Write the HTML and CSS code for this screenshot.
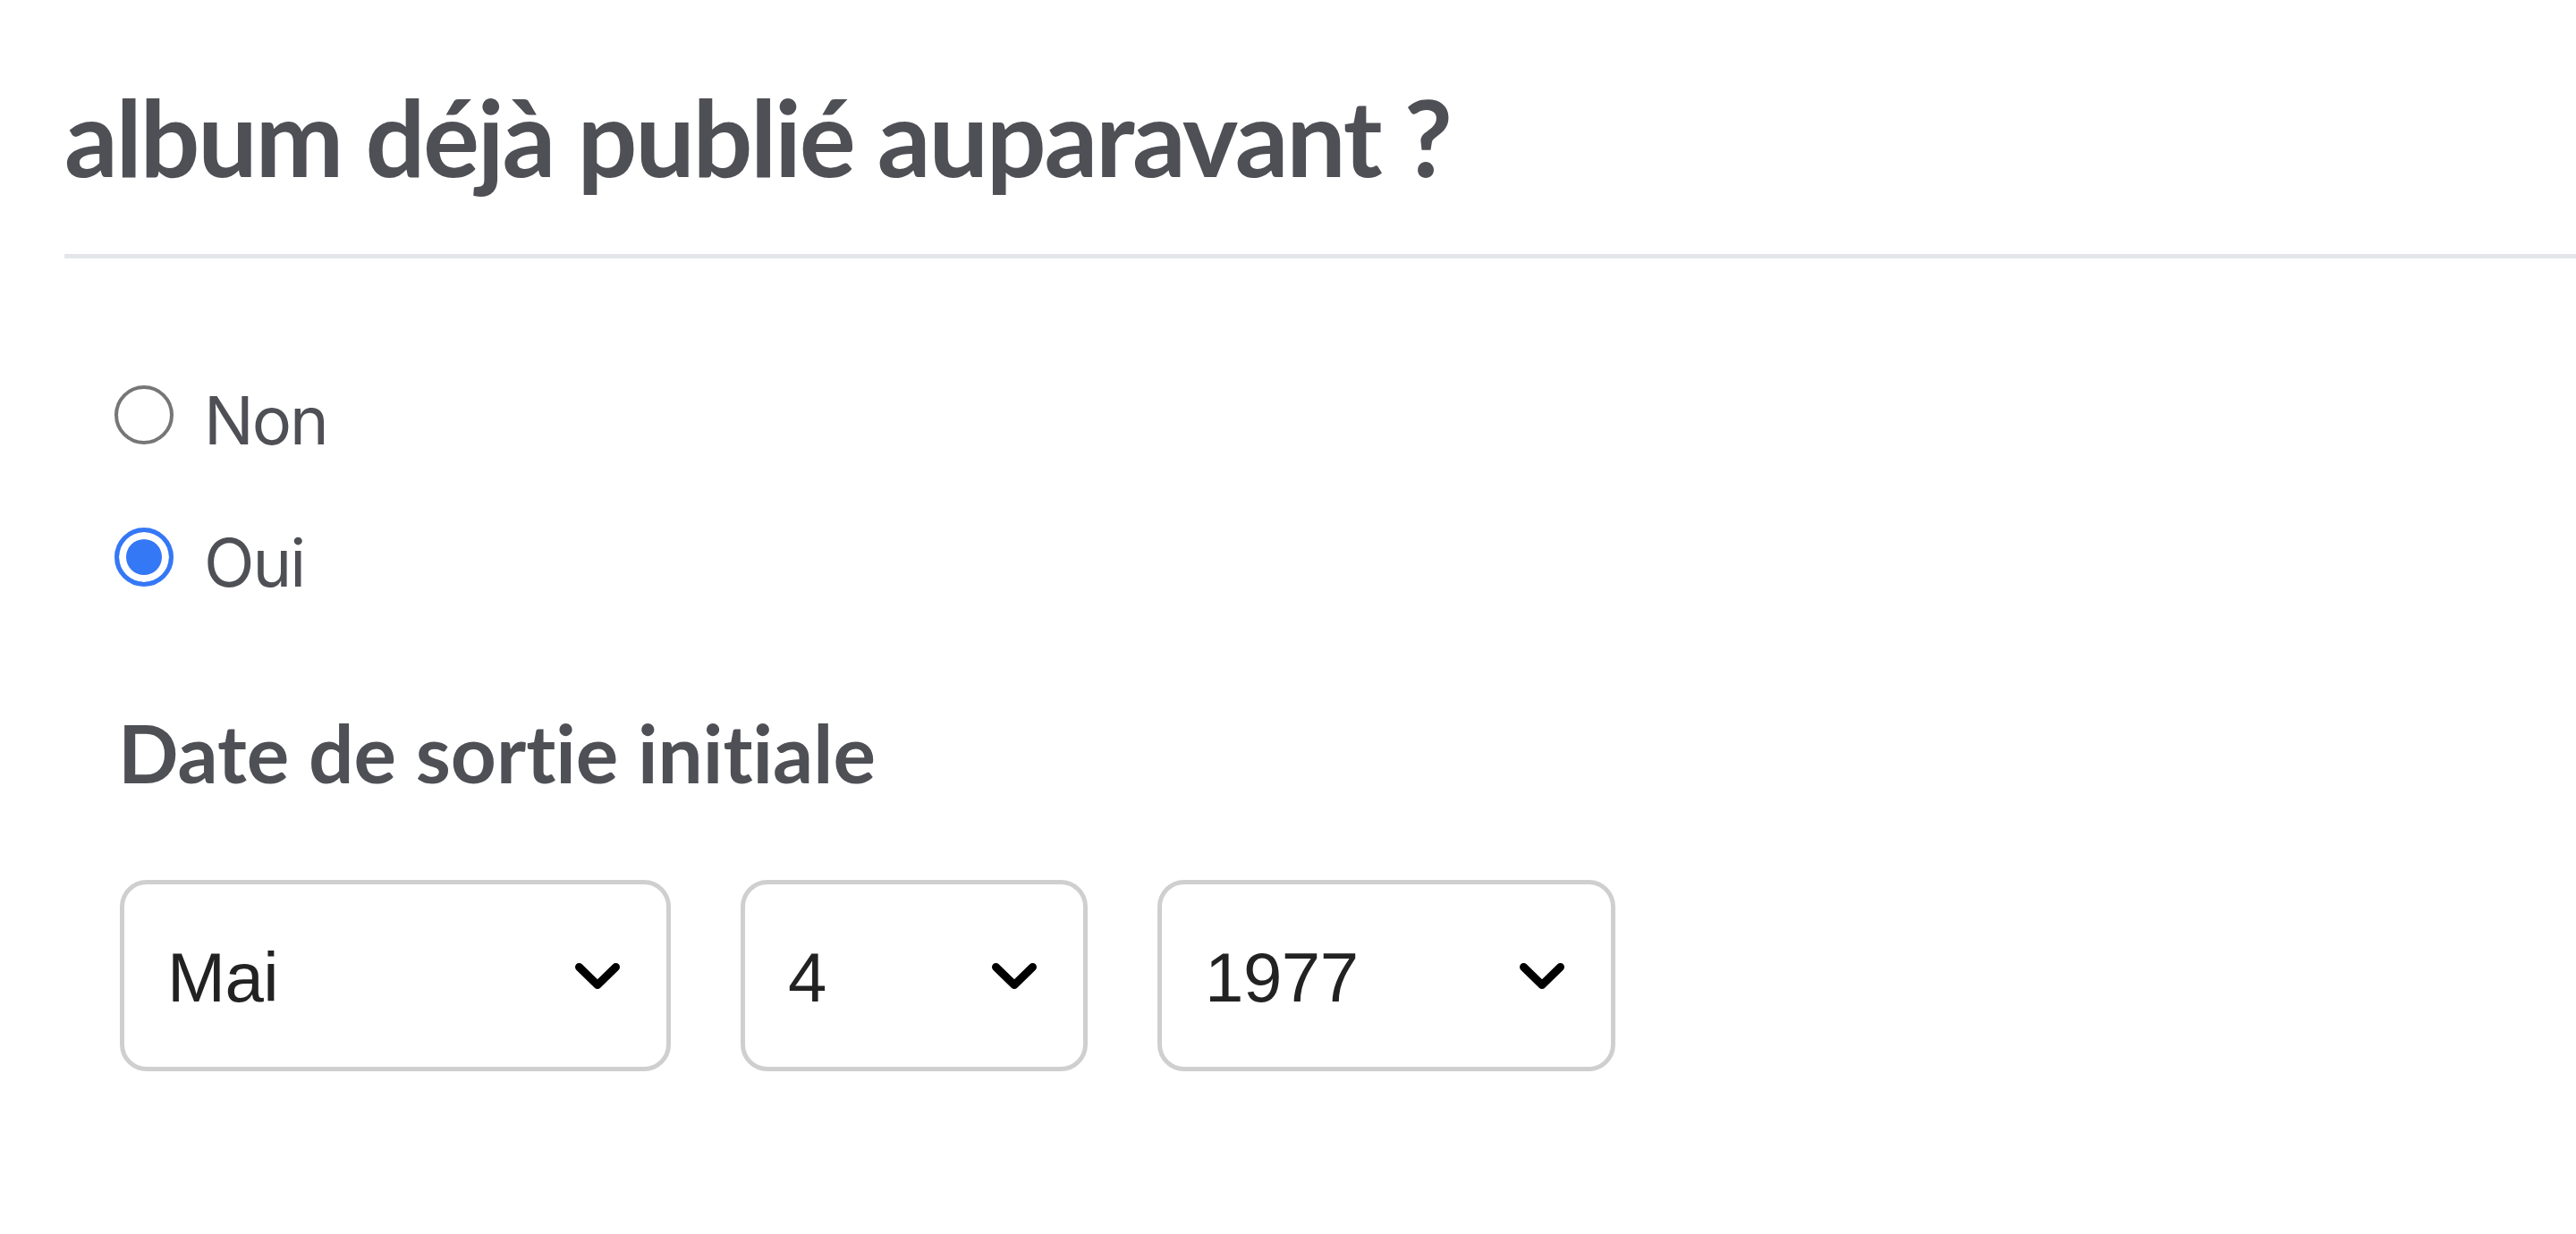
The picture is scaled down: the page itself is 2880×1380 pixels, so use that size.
FILE: index.html
```html
<!DOCTYPE html>
<html lang="fr">
<head>
<meta charset="utf-8">
<title>Album déjà publié</title>
<link rel="stylesheet" href="styles.css">
</head>
<body>
<main class="page">
  <h1 class="title">album déjà publié auparavant ?</h1>
  <hr class="rule">
  <section class="section">
    <div class="radios">
      <label class="radio-row">
        <input type="radio" name="published" class="radio">
        <span class="radio-text">Non</span>
      </label>
      <label class="radio-row">
        <input type="radio" name="published" class="radio" checked>
        <span class="radio-text">Oui</span>
      </label>
    </div>
    <h2 class="date-label">Date de sortie initiale</h2>
    <div class="selects">
      <div class="select select-month">
        <span class="select-value">Mai</span>
        <svg class="chevron" viewBox="0 0 50 29" width="50" height="29"><polyline points="4.5,4.5 25,24.5 45.5,4.5" fill="none" stroke="#000" stroke-width="9" stroke-linecap="round" stroke-linejoin="round"/></svg>
      </div>
      <div class="select select-day">
        <span class="select-value">4</span>
        <svg class="chevron" viewBox="0 0 50 29" width="50" height="29"><polyline points="4.5,4.5 25,24.5 45.5,4.5" fill="none" stroke="#000" stroke-width="9" stroke-linecap="round" stroke-linejoin="round"/></svg>
      </div>
      <div class="select select-year">
        <span class="select-value">1977</span>
        <svg class="chevron" viewBox="0 0 50 29" width="50" height="29"><polyline points="4.5,4.5 25,24.5 45.5,4.5" fill="none" stroke="#000" stroke-width="9" stroke-linecap="round" stroke-linejoin="round"/></svg>
      </div>
    </div>
  </section>
</main>
</body>
</html>
```

FILE: styles.css
```css
html, body {
  margin: 0;
  padding: 0;
  background: #ffffff;
}

.page {
  padding: 82px 0 0 72px;
  color: #4f5056;
}

.title {
  margin: 0;
  font-family: Lato, "Noto Sans", sans-serif;
  font-weight: 700;
  font-size: 118px;
  line-height: 1.2;
  letter-spacing: -2.3px;
  font-variant-ligatures: none;
  color: #4f5056;
}

.rule {
  margin: 60px 0 0 0;
  height: 5px;
  border: 0;
  background: #e5e6ea;
}

.section {
  padding-left: 56px;
}

.radios {
  display: flex;
  flex-direction: column;
  gap: 69px;
  margin-top: 136px;
}

.radio-row {
  display: flex;
  align-items: center;
  gap: 34px;
  height: 90px;
}

.radio {
  appearance: none;
  -webkit-appearance: none;
  box-sizing: border-box;
  width: 66px;
  height: 66px;
  margin: 0 0 12px 0;
  border: 4px solid #767676;
  border-radius: 50%;
  background: #ffffff;
  flex: none;
}

.radio:checked {
  border: 5px solid #3478f6;
  background: #3478f6;
  box-shadow: inset 0 0 0 8px #ffffff;
}

.radio-text {
  font-family: Inter, "Noto Sans", sans-serif;
  font-size: 74px;
  line-height: 90px;
  letter-spacing: -2px;
  color: #4f5056;
}

.date-label {
  margin: 115px 0 0 4px;
  font-family: Lato, "Noto Sans", sans-serif;
  font-weight: 700;
  font-size: 89px;
  line-height: 1.2;
  font-variant-ligatures: none;
  color: #4f5056;
}

.selects {
  display: flex;
  gap: 78px;
  margin: 89px 0 0 6px;
}

.select {
  box-sizing: border-box;
  height: 214px;
  border: 5px solid #cfcfcf;
  border-radius: 30px;
  background: #ffffff;
  display: flex;
  align-items: center;
  justify-content: space-between;
  padding: 4px 52px 0 48px;
}

.select-month { width: 616px; }
.select-day { width: 388px; }
.select-year { width: 512px; }

.select-value {
  font-family: "Liberation Sans", Arial, sans-serif;
  font-size: 78px;
  line-height: 1;
  letter-spacing: -0.5px;
  color: #222222;
}

.chevron {
  flex: none;
  display: block;
  margin-top: -4px;
}
```
